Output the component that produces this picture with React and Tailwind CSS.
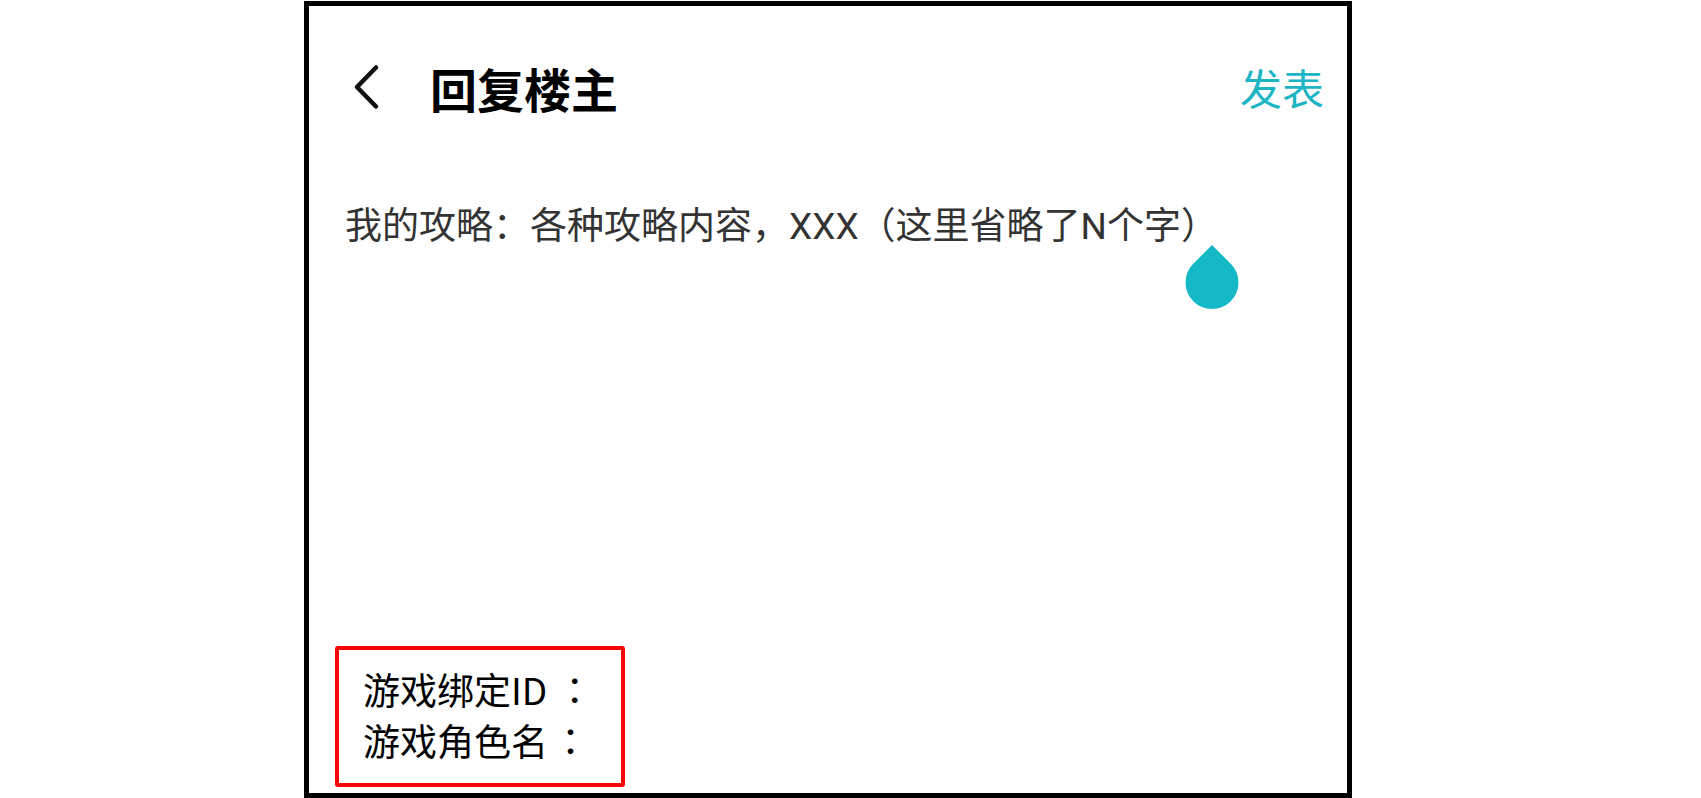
export default function App() {
  return (
    <div className="w-[1701px] h-[798px] bg-white overflow-hidden">
      <div className="ml-[304px] pt-[1px]">
        <div className="relative w-[1048px] h-[797px] border-[5px] border-black bg-white flex flex-col">
          {/* top bar */}
          <div className="mt-[41px] h-[80px] flex items-center">
            <svg className="ml-[43px] shrink-0" width="28" height="46" viewBox="0 0 28 46" fill="none">
              <polyline points="24,3.5 5,23 24,42.5" stroke="#111" strokeWidth="4.5" strokeLinecap="round" strokeLinejoin="round" />
            </svg>
            <div className="ml-[50px] text-[47px] font-bold text-black leading-none" style={{ fontFamily: '"Noto Sans CJK SC", sans-serif' }}>
              回复楼主
            </div>
            <div className="ml-auto mr-[23px] text-[42px] text-[#1db4c4] leading-none" style={{ fontFamily: '"Noto Sans CJK SC", sans-serif' }}>
              发表
            </div>
          </div>

          {/* reply body */}
          <div className="mt-[72px] ml-[36px] text-[37px] leading-[56px] text-[#333333]" style={{ fontFamily: 'Roboto, "Noto Sans CJK SC", sans-serif' }}>
            我的攻略：各种攻略内容，XXX（这里省略了N个字）
          </div>

          {/* text cursor handle */}
          <svg className="absolute left-[876px] top-[238px]" width="54" height="66" viewBox="0 0 54 66">
            <path d="M27 1 L45.74 19.77 A26.5 26.5 0 1 1 8.26 19.77 Z" fill="#15b8c7" />
          </svg>

          <div className="flex-1" />

          {/* bound game account info */}
          <div className="ml-[26px] mb-[6px] w-[290px] h-[141px] border-[4px] border-[#ff0000] rounded-[3px] pl-[24px] pt-[14px] text-[37px] leading-[51px] text-black" style={{ fontFamily: '"Noto Sans CJK SC", sans-serif' }}>
            <div className="whitespace-nowrap">
              游戏绑定ID<span className="ml-[9px]" style={{ fontFamily: '"Noto Sans CJK TC", sans-serif' }}>：</span>
            </div>
            <div className="whitespace-nowrap">
              游戏角色名<span className="ml-[4px]" style={{ fontFamily: '"Noto Sans CJK TC", sans-serif' }}>：</span>
            </div>
          </div>
        </div>
      </div>
    </div>
  );
}
